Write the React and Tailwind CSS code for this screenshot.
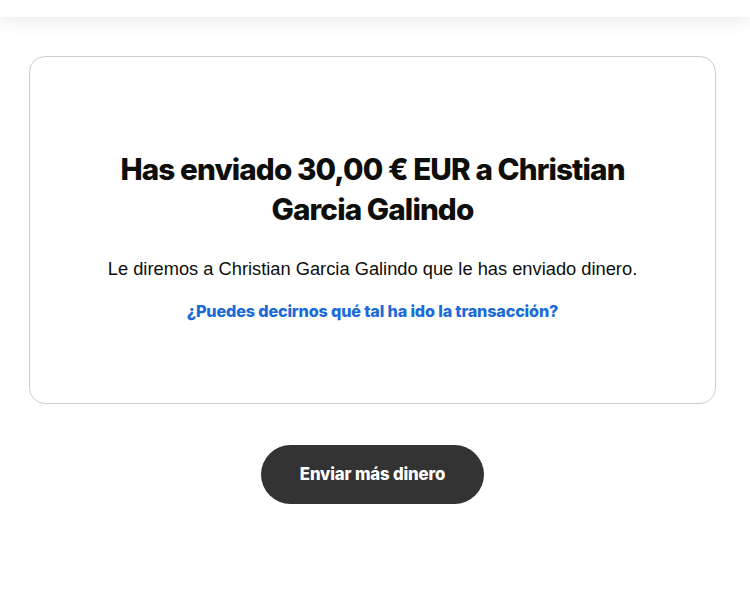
export default function App() {
  return (
    <div className="min-h-[612px] bg-white font-['Inter',sans-serif]">
      {/* top bar */}
      <div className="h-[17px] bg-white shadow-[0_4px_18px_rgba(0,0,0,0.09)]" />

      <div className="pl-[29px] pr-[34px] pt-[39px]">
        <div className="flex h-[348px] flex-col items-center rounded-[16px] border border-[#cfcfcf] px-10 pt-[92px]">
          <h1 className="max-w-[520px] text-center text-[29.7px] font-extrabold leading-[40px] tracking-[-0.03em] text-[#0e0f0c]">
            Has enviado 30,00 € EUR a Christian Garcia Galindo
          </h1>
          <p className="mt-[27px] font-['Liberation_Sans',Arial,sans-serif] text-[18.3px] leading-[26px] text-[#0e0f0c]">
            Le diremos a Christian Garcia Galindo que le has enviado dinero.
          </p>
          <a
            href="#"
            className="mt-[17px] text-[16.2px] font-extrabold tracking-[-0.01em] text-[#1a6ad8]"
          >
            ¿Puedes decirnos qué tal ha ido la transacción?
          </a>
        </div>

        <div className="mt-[41px] flex justify-center">
          <button className="h-[59px] w-[223px] rounded-full bg-[#333333] text-[16.8px] font-extrabold tracking-[-0.01em] text-white">
            Enviar más dinero
          </button>
        </div>
      </div>
    </div>
  );
}
